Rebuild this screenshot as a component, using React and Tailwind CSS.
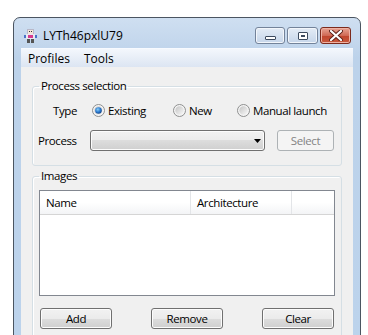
import React from 'react';

const font = { fontFamily: '"Open Sans", "Noto Sans", "Liberation Sans", sans-serif' };

function AppIcon() {
  return (
    <svg width="13" height="14" viewBox="0 0 13 14">
      <rect x="3" y="0" width="7" height="5" fill="#b8b8c8" />
      <rect x="4" y="1" width="5" height="4" fill="#f4e6d8" />
      <rect x="5" y="2" width="1" height="1" fill="#333" />
      <rect x="7" y="2" width="1" height="1" fill="#333" />
      <rect x="2" y="5" width="9" height="5" fill="#e8e8f0" />
      <rect x="4" y="6" width="5" height="3" fill="#d83a8c" />
      <rect x="0" y="6" width="2" height="3" fill="#4a74c8" />
      <rect x="11" y="6" width="2" height="3" fill="#4a74c8" />
      <rect x="3" y="10" width="3" height="4" fill="#555" />
      <rect x="7" y="10" width="3" height="4" fill="#555" />
    </svg>
  );
}

function Radio({ checked }) {
  return (
    <svg width="13" height="13" viewBox="0 0 13 13">
      <defs>
        <linearGradient id="rbg" x1="0" y1="0" x2="1" y2="1">
          <stop offset="0%" stopColor="#c4c4c4" />
          <stop offset="100%" stopColor="#f8f8f8" />
        </linearGradient>
        <radialGradient id="rdot" cx="0.4" cy="0.35" r="0.7">
          <stop offset="0%" stopColor="#8ad0f8" />
          <stop offset="55%" stopColor="#2a7ad0" />
          <stop offset="100%" stopColor="#123e80" />
        </radialGradient>
      </defs>
      <circle cx="6.5" cy="6.5" r="6" fill="#f4f4f4" stroke="#8e8f8f" strokeWidth="1" />
      <circle cx="6.5" cy="6.5" r="4.2" fill="url(#rbg)" />
      {checked && <circle cx="6.5" cy="6.5" r="3.3" fill="url(#rdot)" />}
    </svg>
  );
}

function Btn({ children }) {
  return (
    <div className="flex h-[21px] w-[72px] items-center justify-center rounded-[3px] border border-[#707070] bg-[linear-gradient(#f2f2f2_0%,#ebebeb_50%,#dddddd_50%,#cfcfcf_100%)] text-black shadow-[inset_0_0_0_1px_#fcfcfc]">
      {children}
    </div>
  );
}

function CaptionButtons() {
  return (
    <div className="mr-[2px] ml-auto flex gap-[2px]">
      <div className="flex h-[17px] w-[30px] items-end justify-center rounded-[3px] border border-[#73839a] bg-[linear-gradient(#e4ecf6,#c6d6ea)] pb-[3px] shadow-[inset_0_0_0_1px_#f2f6fb]">
        <div className="h-[4px] w-[11px] rounded-[1px] border border-[#3c4a5e] bg-white" />
      </div>
      <div className="flex h-[17px] w-[31px] items-center justify-center rounded-[3px] border border-[#73839a] bg-[linear-gradient(#e4ecf6,#c6d6ea)] shadow-[inset_0_0_0_1px_#f2f6fb]">
        <div className="flex h-[8px] w-[10px] items-center justify-center rounded-[1px] border border-[#3c4a5e] bg-white">
          <div className="h-[2px] w-[4px] border border-[#3c4a5e]" />
        </div>
      </div>
      <div className="flex h-[17px] w-[31px] items-center justify-center rounded-[3px] border border-[#7c2a1c] bg-[linear-gradient(#e8a494,#d06a55_50%,#c0442c_51%,#c85a3e)] shadow-[inset_0_0_0_1px_#eeb2a4]">
        <svg width="14" height="11" viewBox="0 0 14 11">
          <path d="M2 1 L12 10 M12 1 L2 10" stroke="#5a2018" strokeWidth="4" strokeLinecap="round" />
          <path d="M2 1 L12 10 M12 1 L2 10" stroke="#ffffff" strokeWidth="2.2" strokeLinecap="round" />
        </svg>
      </div>
    </div>
  );
}

function Group({ title, className = '', children }) {
  return (
    <fieldset className={`mx-[11px] rounded-[3px] border border-[#d5dfe5] p-0 shadow-[inset_1px_1px_0_#fff] ${className}`}>
      <legend className="ml-[6px] px-[2px] leading-[16px]">{title}</legend>
      {children}
    </fieldset>
  );
}

export default function App() {
  return (
    <div className="h-[335px] w-[368px] overflow-hidden bg-white text-black" style={font}>
      <div className="mt-[17px] ml-[13px] h-[340px] w-[348px] rounded-t-[7px] border border-[#4b5561] bg-[linear-gradient(#cfdff1_0px,#bcd2ea_40px,#bcd3ec_100%)] px-[7px]">
        {/* title bar */}
        <div className="flex h-[30px] items-center pt-[5px]">
          <div className="ml-[3px]">
            <AppIcon />
          </div>
          <span className="ml-[6px] text-[12px] leading-none">LYTh46pxlU79</span>
          <CaptionButtons />
        </div>

        {/* menu bar */}
        <div className="flex h-[19px] items-center border-t border-[#f7faff] bg-[linear-gradient(#f3f7fc,#dce5f2)] pt-[1px] text-[12px]">
          <span className="px-[7px]">Profiles</span>
          <span className="px-[7px]">Tools</span>
        </div>

        {/* client area */}
        <div className="h-[300px] bg-[#f0f0f0] pt-[11px] text-[11.5px] tracking-[-0.4px]">
          <Group title="Process selection" className="h-[88px]">
            <div className="mt-[6px] flex h-[21px] items-center pl-[20px]">
              <span className="w-[39px]">Type</span>
              <div className="flex w-[81px] items-center gap-[3px]">
                <Radio checked />
                <span>Existing</span>
              </div>
              <div className="flex w-[64px] items-center gap-[3px]">
                <Radio />
                <span>New</span>
              </div>
              <div className="flex items-center gap-[3px]">
                <Radio />
                <span>Manual launch</span>
              </div>
            </div>
            <div className="mt-[9px] flex h-[21px] items-center pl-[5px]">
              <span className="w-[52px]">Process</span>
              <div className="flex h-[21px] w-[175px] items-center justify-end rounded-[3px] border border-[#707070] bg-[linear-gradient(#f2f2f2_0%,#ebebeb_50%,#dddddd_50%,#cfcfcf_100%)] pr-[3px] shadow-[inset_0_0_0_1px_#fcfcfc]">
                <svg width="7" height="4" viewBox="0 0 7 4">
                  <path d="M0 0 H7 L3.5 4 Z" fill="#000" />
                </svg>
              </div>
              <div className="ml-[12px] flex h-[21px] w-[57px] items-center justify-center rounded-[3px] border border-[#adb2b5] bg-[#f4f4f4] text-[#838383]">
                Select
              </div>
            </div>
          </Group>

          <Group title="Images" className="mt-[2px] h-[200px]">
            <div className="mx-[6px] mt-[6px] h-[106px] border border-[#828790] bg-white">
              <div className="flex h-[24px] border-b border-[#d5d5d5] bg-[linear-gradient(#ffffff,#ffffff_50%,#f3f4f6_100%)]">
                <div className="flex w-[151px] items-center border-r border-[#e3e5e8] pl-[6px]">Name</div>
                <div className="flex w-[101px] items-center border-r border-[#e3e5e8] pl-[6px]">Architecture</div>
                <div className="flex-1" />
              </div>
            </div>
            <div className="mx-[7px] mt-[12px] flex justify-between">
              <Btn>Add</Btn>
              <Btn>Remove</Btn>
              <Btn>Clear</Btn>
            </div>
          </Group>
        </div>
      </div>
    </div>
  );
}
